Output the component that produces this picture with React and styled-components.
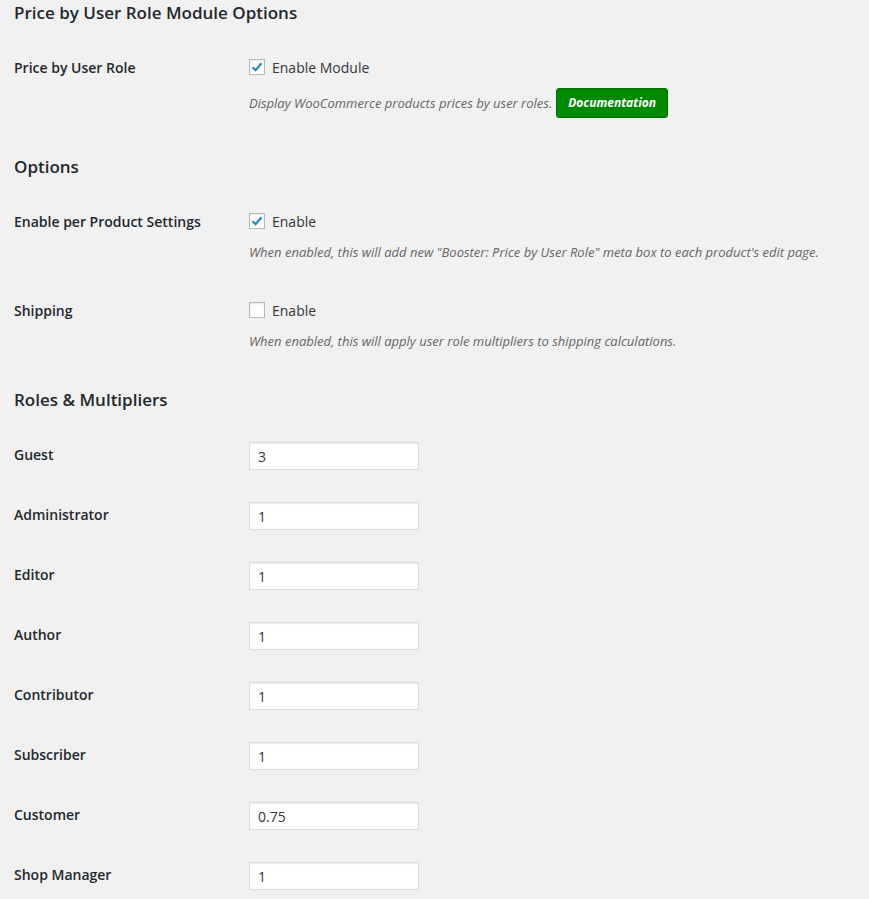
import React from "react";
import styled, { createGlobalStyle } from "styled-components";

const Global = createGlobalStyle`
  body { margin: 0; background: #f1f1f1; font-family: "Open Sans", "Noto Sans", sans-serif; color: #444; }
`;
const Page = styled.div`padding: 0 14px; width: 869px; box-sizing: border-box;`;
const Title = styled.h2`
  margin: ${p => p.$top}px 0 0; font-size: 17px; line-height: 22px; font-weight: 600; color: #23282d;
`;
const Rows = styled.div`margin-top: 15px;`;
const Row = styled.div`
  display: grid; grid-template-columns: 235px 1fr; padding-bottom: ${p => p.$pb}px;
`;
const Label = styled.div`
  padding-top: 20px; font-size: 14px; line-height: 18px; font-weight: 600; color: #23282d;
`;
const Field = styled.div`display: flex; flex-direction: column; align-items: flex-start; padding-top: 16px;`;
const CheckLine = styled.label`
  display: flex; align-items: center; gap: 7px; height: 24px; font-size: 14px; color: #32373c;
`;
const Box = styled.span`
  width: 16px; height: 16px; box-sizing: border-box; border: 1px solid #b4b9be; background: #fff;
  box-shadow: inset 0 1px 2px rgba(0,0,0,.1); display: flex; align-items: center; justify-content: center;
`;
const Desc = styled.div`
  margin-top: 9px; display: flex; align-items: center; gap: 4px; font-size: 13px; line-height: 20px;
  font-style: italic; color: #666; white-space: nowrap;
`;
const Btn = styled.span`
  height: 28px; padding: 0 11px; display: inline-flex; align-items: center; background: #008a00;
  border: 1px solid #006e00; border-radius: 3px; color: #fff; font-weight: 700; font-size: 12px; font-style: italic;
`;
const Input = styled.input`
  width: 170px; height: 28px; box-sizing: border-box; border: 1px solid #ddd; background: #fff;
  box-shadow: inset 0 1px 2px rgba(0,0,0,.07); padding: 0 8px; font: 14px "Open Sans", sans-serif; color: #32373c; margin: 0;
`;

const Check = ({ on }) => (
  <Box>
    {on && (
      <svg width="14" height="14" viewBox="0 0 14 14">
        <path d="M2.5 7.2 L5.6 10.2 L11.5 3.2" fill="none" stroke="#1e8cbe" strokeWidth="2.2" />
      </svg>
    )}
  </Box>
);

const roles = [["Guest","3"],["Administrator","1"],["Editor","1"],["Author","1"],["Contributor","1"],["Subscriber","1"],["Customer","0.75"],["Shop Manager","1"]];

export default function App() {
  return (
    <Page>
      <Global />
      <Title $top={2}>Price by User Role Module Options</Title>
      <Rows>
        <Row $pb={20}>
          <Label>Price by User Role</Label>
          <Field>
            <CheckLine><Check on />Enable Module</CheckLine>
            <Desc>Display WooCommerce products prices by user roles. <Btn>Documentation</Btn></Desc>
          </Field>
        </Row>
      </Rows>
      <Title $top={18}>Options</Title>
      <Rows>
        <Row $pb={20}>
          <Label>Enable per Product Settings</Label>
          <Field>
            <CheckLine><Check on />Enable</CheckLine>
            <Desc>When enabled, this will add new "Booster: Price by User Role" meta box to each product's edit page.</Desc>
          </Field>
        </Row>
        <Row $pb={20}>
          <Label>Shipping</Label>
          <Field>
            <CheckLine><Check />Enable</CheckLine>
            <Desc>When enabled, this will apply user role multipliers to shipping calculations.</Desc>
          </Field>
        </Row>
      </Rows>
      <Title $top={18}>Roles &amp; Multipliers</Title>
      <Rows>
        {roles.map(([n, v]) => (
          <Row key={n} $pb={16}>
            <Label>{n}</Label>
            <Field><Input defaultValue={v} /></Field>
          </Row>
        ))}
      </Rows>
    </Page>
  );
}
